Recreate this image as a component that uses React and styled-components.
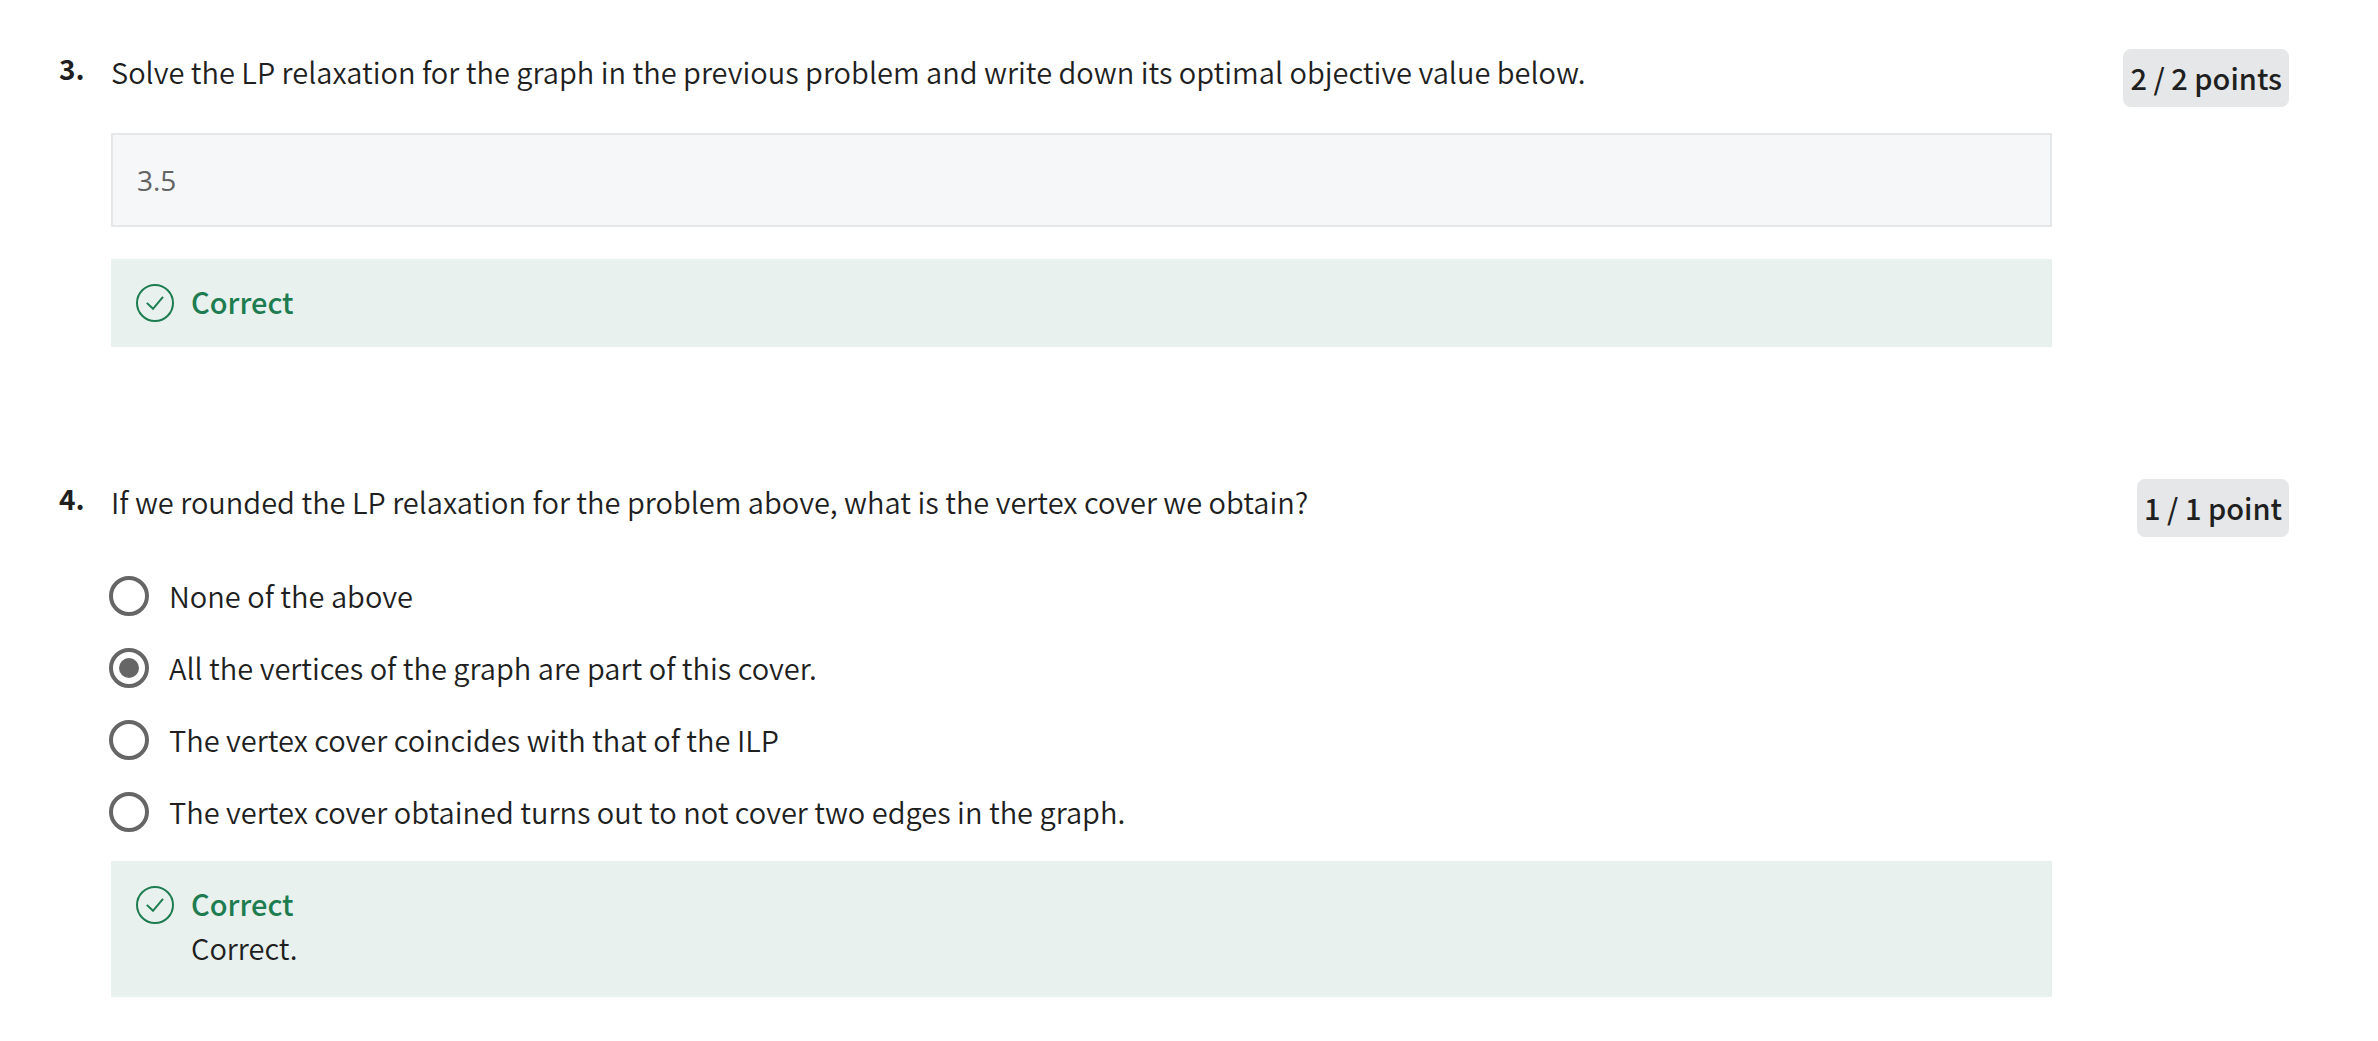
import React, { useState } from "react";
import styled, { createGlobalStyle } from "styled-components";

const GlobalStyle = createGlobalStyle`
  *, *::before, *::after { box-sizing: border-box; }
  body {
    margin: 0;
    background: #fff;
    color: #1f1f1f;
    font-family: "Noto Sans CJK SC", "Open Sans", sans-serif;
    font-size: 29px;
    font-weight: 350;
    line-height: 44px;
  }
`;

const Quiz = styled.main`
  display: flex;
  flex-direction: column;
  gap: 132px;
  padding: 49px 89px 44px 59px;
`;

const QuestionRow = styled.section`
  display: grid;
  grid-template-columns: 52px minmax(0, 1fr) 237px;
  align-items: start;
`;

const QuestionNumber = styled.div`
  font-size: 28px;
  font-weight: 700;
  line-height: 38px;
`;

const QuestionBody = styled.div`
  display: flex;
  flex-direction: column;
`;

const Prompt = styled.label`
  display: block;
`;

const Points = styled.div`
  justify-self: end;
  padding: 6px 7px 8px;
  border-radius: 8px;
  background: #e5e7e8;
  font-weight: 500;
  white-space: nowrap;
`;

const AnswerInput = styled.input`
  width: 100%;
  height: 94px;
  margin-top: 40px;
  padding: 0 24px;
  border: 2px solid #e5e7e8;
  border-radius: 0;
  background: #f5f7f8;
  color: #636363;
  font-family: "Open Sans", sans-serif;
  font-size: 28px;
  outline: none;
`;

const Options = styled.div`
  display: flex;
  flex-direction: column;
  gap: 32px;
  margin: 53px 0 0 -2px;
`;

const Option = styled.label`
  display: flex;
  align-items: center;
  gap: 20px;
`;

const OptionText = styled.span`
  padding-bottom: 2px;
  line-height: 38px;
`;

const Radio = styled.input`
  appearance: none;
  display: grid;
  place-content: center;
  flex: none;
  width: 40px;
  height: 40px;
  margin: 0;
  border: 4px solid #666;
  border-radius: 50%;
  background: #fff;

  &:checked::before {
    content: "";
    width: 20px;
    height: 20px;
    border-radius: 50%;
    background: #666;
  }
`;

const Feedback = styled.div`
  display: flex;
  gap: 17px;
  margin-top: ${(p) => p.$gap}px;
  padding: 20px 25px ${(p) => (p.$hasNote ? 28 : 24)}px;
  background: #e8f1ee;
`;

const FeedbackIcon = styled.svg`
  flex: none;
  width: 38px;
  height: 38px;
  margin-top: 5px;
`;

const FeedbackTitle = styled.strong`
  display: block;
  color: #1d7c50;
  font-weight: 500;
`;

const FeedbackNote = styled.p`
  margin: 0;
`;

function CorrectFeedback({ gap, note }) {
  return (
    <Feedback $gap={gap} $hasNote={Boolean(note)}>
      <FeedbackIcon viewBox="0 0 38 38" fill="none" stroke="#1d7c50" strokeWidth="2" aria-hidden="true">
        <circle cx="19" cy="19" r="18" />
        <path d="M10.8 18.9 L17 24.8 L27 12.8" />
      </FeedbackIcon>
      <div>
        <FeedbackTitle>Correct</FeedbackTitle>
        {note && <FeedbackNote>{note}</FeedbackNote>}
      </div>
    </Feedback>
  );
}

const OPTIONS = [
  "None of the above",
  "All the vertices of the graph are part of this cover.",
  "The vertex cover coincides with that of the ILP",
  "The vertex cover obtained turns out to not cover two edges in the graph.",
];

export default function App() {
  const [selected, setSelected] = useState(1);

  return (
    <>
      <GlobalStyle />
      <Quiz>
        <QuestionRow>
          <QuestionNumber>3.</QuestionNumber>
          <QuestionBody>
            <Prompt htmlFor="answer-3">
              Solve the LP relaxation for the graph in the previous problem and write down its optimal objective value below.
            </Prompt>
            <AnswerInput id="answer-3" type="text" value="3.5" readOnly />
            <CorrectFeedback gap={32} />
          </QuestionBody>
          <Points>2 / 2 points</Points>
        </QuestionRow>

        <QuestionRow>
          <QuestionNumber>4.</QuestionNumber>
          <QuestionBody>
            <Prompt as="div" id="prompt-4">
              If we rounded the LP relaxation for the problem above, what is the vertex cover we obtain?
            </Prompt>
            <Options role="radiogroup" aria-labelledby="prompt-4">
              {OPTIONS.map((text, i) => (
                <Option key={text}>
                  <Radio type="radio" name="question-4" checked={selected === i} onChange={() => setSelected(i)} />
                  <OptionText>{text}</OptionText>
                </Option>
              ))}
            </Options>
            <CorrectFeedback gap={29} note="Correct." />
          </QuestionBody>
          <Points>1 / 1 point</Points>
        </QuestionRow>
      </Quiz>
    </>
  );
}
